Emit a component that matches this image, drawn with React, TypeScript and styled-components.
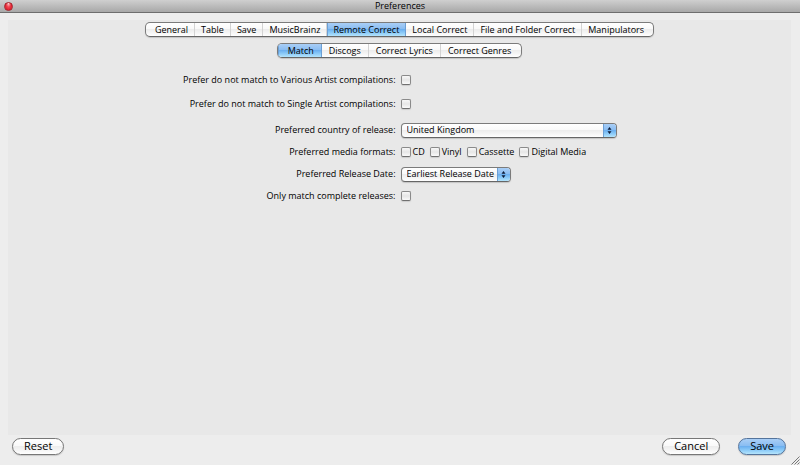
import React, { useState } from "react";
import styled, { createGlobalStyle, css } from "styled-components";

const aqua = "linear-gradient(#a9cef6 0%, #8abdf2 45%, #6cb0f0 50%, #8ccbf8 75%, #b4e4fc 100%)";
const pearl = "linear-gradient(#ffffff 0%, #f9f9f9 45%, #ededed 50%, #f5f5f5 75%, #ffffff 100%)";

const GlobalStyle = createGlobalStyle`
  * { box-sizing: border-box; }
  body { margin: 0; background: #ededed; }
  body, button, select, input {
    color: #000;
    font-family: "Open Sans", "Noto Sans", sans-serif;
    font-size: 9px;
    font-weight: 500;
    line-height: 12px;
  }
`;

const Window = styled.div`
  display: flex;
  flex-direction: column;
  min-height: 100vh;
`;

const TitleBar = styled.header`
  display: grid;
  grid-template-columns: 1fr auto 1fr;
  align-items: center;
  height: 13px;
  padding: 0 4px;
  background: linear-gradient(#cfcfcf, #a8a8a8);
  border-bottom: 1px solid #6e6e6e;
`;

const Title = styled.h1`
  margin: 0;
  font-size: 9px;
  font-weight: 500;
  line-height: 12px;
`;

const CloseButton = styled.button`
  width: 9px;
  height: 9px;
  padding: 0;
  border: 1px solid #a3212b;
  border-radius: 50%;
  background: radial-gradient(ellipse at 50% 0%, #ffdcdc 0%, #f04a55 40%, #e3202f 70%, #ff8c8c 100%);
`;

const Pane = styled.main`
  flex: 1;
  display: flex;
  flex-direction: column;
  align-items: center;
  margin: 7px 9px 0 8px;
  padding-top: 2px;
  background: #e8e8e8;
`;

const TabStrip = styled.div<{ $gap: number }>`
  display: flex;
  height: 15px;
  margin-top: ${(p) => p.$gap}px;
  border: 1px solid #7b7b7b;
  border-bottom-color: #666;
  border-radius: 5px;
  background: ${pearl};
  box-shadow: 0 1px 1px #c4c4c4;
  overflow: hidden;
`;

const Tab = styled.button<{ $selected: boolean; $pad: number }>`
  height: 13px;
  padding: 0 ${(p) => p.$pad}px;
  border: 0;
  border-right: 1px solid #d3d3d3;
  background: transparent;
  white-space: nowrap;
  &:first-child { padding-left: ${(p) => p.$pad + 3}px; }
  &:last-child { padding-right: ${(p) => p.$pad + 3}px; border-right: 0; }
  ${(p) =>
    p.$selected &&
    css`
      background: ${aqua};
      border-right-color: #6c9fd4;
      box-shadow: inset 1px 0 #6c9fd4;
    `}
`;

const Form = styled.form`
  align-self: stretch;
  display: flex;
  flex-direction: column;
  padding: 14px 3px 20px 0;
`;

const Row = styled.div<{ $height: number }>`
  display: grid;
  grid-template-columns: 1fr 1fr;
  column-gap: 5px;
  align-items: center;
  height: ${(p) => p.$height}px;
`;

const FieldLabel = styled.label`
  text-align: right;
  white-space: nowrap;
`;

const Checkbox = styled.input.attrs({ type: "checkbox" })`
  appearance: none;
  display: block;
  flex: none;
  width: 10px;
  height: 10px;
  margin: 0;
  border: 1px solid #8a8a8a;
  border-bottom-color: #707070;
  border-radius: 2px;
  background: linear-gradient(#f8f8f8, #e6e6e6 50%, #fafafa);
  box-shadow: 0 1px 1px #cccccc;
  &:checked { background: ${aqua}; }
`;

const Options = styled.div`
  display: flex;
  gap: 5px;
`;

const Option = styled.label`
  display: flex;
  align-items: center;
  gap: 2px;
  white-space: nowrap;
`;

const PopupFrame = styled.div<{ $width: number }>`
  position: relative;
  width: ${(p) => p.$width}px;
  height: 15px;
  border: 1px solid #7b7b7b;
  border-bottom-color: #666;
  border-radius: 4px;
  background: ${pearl};
  box-shadow: 0 1px 1px #c4c4c4;
  overflow: hidden;
`;

const PopupSelect = styled.select`
  appearance: none;
  display: block;
  width: 100%;
  height: 13px;
  padding: 0 14px 0 5px;
  border: 0;
  background: transparent;
`;

const PopupCap = styled.span`
  position: absolute;
  top: 0;
  right: 0;
  bottom: 0;
  display: grid;
  place-items: center;
  width: 13px;
  border-left: 1px solid #6c9fd4;
  background: ${aqua};
  pointer-events: none;
`;

const Footer = styled.footer`
  display: flex;
  align-items: center;
  justify-content: space-between;
  height: 30px;
  padding: 0 14px 8px 12px;
`;

const Actions = styled.div`
  display: flex;
  gap: 18px;
`;

const PushButton = styled.button<{ $primary?: boolean }>`
  height: 17px;
  padding: 0 11px;
  border: 1px solid ${(p) => (p.$primary ? "#54749c" : "#777")};
  border-radius: 9px;
  background: ${(p) => (p.$primary ? aqua : pearl)};
  box-shadow: 0 1px 1px #c8c8c8;
  font-size: 11px;
  line-height: 14px;
`;

const Grip = styled.svg`
  position: fixed;
  right: 0;
  bottom: 0;
`;

type TabsProps = { items: string[]; initial: string; label: string; gap: number; pad: number };

function Tabs({ items, initial, label, gap, pad }: TabsProps) {
  const [selected, setSelected] = useState(initial);
  return (
    <TabStrip role="tablist" aria-label={label} $gap={gap}>
      {items.map((item) => (
        <Tab
          key={item}
          type="button"
          role="tab"
          aria-selected={item === selected}
          $selected={item === selected}
          $pad={pad}
          onClick={() => setSelected(item)}
        >
          {item}
        </Tab>
      ))}
    </TabStrip>
  );
}

function Popup({ id, width, options }: { id: string; width: number; options: string[] }) {
  return (
    <PopupFrame $width={width}>
      <PopupSelect id={id}>
        {options.map((o) => (
          <option key={o}>{o}</option>
        ))}
      </PopupSelect>
      <PopupCap>
        <svg width="5" height="9" viewBox="0 0 5 9" aria-hidden="true">
          <path d="M2.5 1 4.5 3.8H0.5ZM2.5 8 0.5 5.2H4.5Z" fill="#0c1c38" />
        </svg>
      </PopupCap>
    </PopupFrame>
  );
}

export default function App() {
  return (
    <Window>
      <GlobalStyle />
      <TitleBar>
        <CloseButton type="button" aria-label="Close" />
        <Title>Preferences</Title>
      </TitleBar>
      <Pane>
        <Tabs
          label="Sections"
          initial="Remote Correct"
          gap={0}
          pad={6}
          items={["General", "Table", "Save", "MusicBrainz", "Remote Correct", "Local Correct", "File and Folder Correct", "Manipulators"]}
        />
        <Tabs
          label="Remote Correct"
          initial="Match"
          gap={6}
          pad={7}
          items={["Match", "Discogs", "Correct Lyrics", "Correct Genres"]}
        />
        <Form>
          <Row $height={16}>
            <FieldLabel htmlFor="various">Prefer do not match to Various Artist compilations:</FieldLabel>
            <Checkbox id="various" />
          </Row>
          <Row $height={32}>
            <FieldLabel htmlFor="single">Prefer do not match to Single Artist compilations:</FieldLabel>
            <Checkbox id="single" />
          </Row>
          <Row $height={20}>
            <FieldLabel htmlFor="country">Preferred country of release:</FieldLabel>
            <Popup id="country" width={216} options={["United Kingdom"]} />
          </Row>
          <Row $height={24}>
            <FieldLabel as="span" id="formats">Preferred media formats:</FieldLabel>
            <Options role="group" aria-labelledby="formats">
              {["CD", "Vinyl", "Cassette", "Digital Media"].map((format) => (
                <Option key={format}>
                  <Checkbox />
                  {format}
                </Option>
              ))}
            </Options>
          </Row>
          <Row $height={20}>
            <FieldLabel htmlFor="date">Preferred Release Date:</FieldLabel>
            <Popup id="date" width={110} options={["Earliest Release Date"]} />
          </Row>
          <Row $height={24}>
            <FieldLabel htmlFor="complete">Only match complete releases:</FieldLabel>
            <Checkbox id="complete" />
          </Row>
        </Form>
      </Pane>
      <Footer>
        <PushButton type="button">Reset</PushButton>
        <Actions>
          <PushButton type="button">Cancel</PushButton>
          <PushButton type="button" $primary>Save</PushButton>
        </Actions>
      </Footer>
      <Grip width="9" height="9" viewBox="0 0 9 9" aria-hidden="true">
        <path d="M0.5 8.5 8.5 0.5M3.5 8.5 8.5 3.5M6.5 8.5 8.5 6.5" stroke="#777" fill="none" />
      </Grip>
    </Window>
  );
}
